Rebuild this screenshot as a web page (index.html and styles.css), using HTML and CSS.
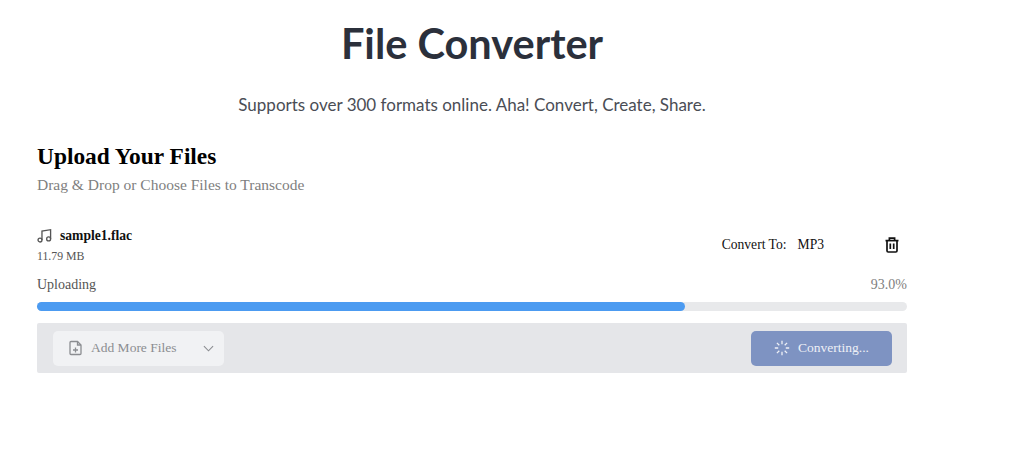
FILE: index.html
```html
<!DOCTYPE html>
<html lang="en">
<head>
    <meta charset="UTF-8">
    <meta name="viewport" content="width=device-width, initial-scale=1.0">
    <title>File Converter</title>
    <link rel="stylesheet" href="styles.css">
</head>
<body>
    <div class="hero">
        <h1>File Converter</h1>
        <p>Supports over 300 formats online. Aha! Convert, Create, Share.</p>
    </div>

    <div class="uploader">
        <h2>Upload Your Files</h2>
        <p class="hint">Drag &amp; Drop or Choose Files to Transcode</p>

        <div class="file-row">
            <div class="file-info">
                <div class="file-name">
                    <svg class="note" width="15" height="15" viewBox="0 0 16 16" fill="none" stroke="#555" stroke-width="1.4">
                        <circle cx="3.2" cy="12.8" r="2.1"/>
                        <circle cx="12.4" cy="11.6" r="2.1"/>
                        <path d="M5.3 12.8V3.2L14.5 1.8v9.8"/>
                    </svg>
                    <span>sample1.flac</span>
                </div>
                <div class="file-size">11.79 MB</div>
            </div>
            <div class="convert-to">
                <span>Convert To:</span>
                <span class="format">MP3</span>
            </div>
            <svg class="trash" width="16" height="16" viewBox="0 0 16 16" fill="none" stroke="#111" stroke-width="1.7">
                <path d="M1.5 3.6h13"/>
                <path d="M5.4 3.4V1.2h5.2v2.2"/>
                <path d="M3 3.6v10.2q0 1.2 1.2 1.2h7.6q1.2 0 1.2-1.2V3.6"/>
                <path d="M6.3 6.6v5.4M9.7 6.6v5.4"/>
            </svg>
        </div>

        <div class="progress-labels">
            <span>Uploading</span>
            <span class="percent">93.0%</span>
        </div>
        <div class="progress-track">
            <div class="progress-fill" style="width: 74.5%"></div>
        </div>

        <div class="action-bar">
            <div class="add-files">
                <svg width="16" height="16" viewBox="0 0 16 16" fill="none" stroke="#8b8d91" stroke-width="1.3">
                    <path d="M3 1.5h6.5L13 5v8.5q0 1-1 1H3q-1 0-1-1v-11q0-1 1-1z"/>
                    <path d="M9.5 1.5V5H13"/>
                    <path d="M7.5 7.5v5M5 10h5"/>
                </svg>
                <span>Add More Files</span>
                <svg class="chevron" width="11" height="11" viewBox="0 0 12 12" fill="none" stroke="#8b8d91" stroke-width="1.2">
                    <path d="M1 3.5l5 5 5-5"/>
                </svg>
            </div>
            <div class="convert-btn">
                <svg width="16" height="16" viewBox="0 0 16 16" fill="none" stroke="#eef0f6" stroke-width="1.3">
                    <path d="M8 .8v3.4M8 11.8v3.4M.8 8h3.4M11.8 8h3.4M2.9 2.9l2.4 2.4M10.7 10.7l2.4 2.4M2.9 13.1l2.4-2.4M10.7 5.3l2.4-2.4"/>
                </svg>
                <span>Converting...</span>
            </div>
        </div>
    </div>
</body>
</html>
```

FILE: styles.css
```css
body { margin: 0; background-color: #fff; font-family: "Liberation Serif", "Times New Roman", serif; }

.hero { width: 944px; text-align: center; font-family: Lato, sans-serif; }
.hero h1 { margin: 0; padding-top: 17px; font-size: 41.5px; line-height: 53px; font-weight: 700; color: #2b303b; }
.hero p { margin: 23px 0 0; font-size: 17px; line-height: 24px; color: #4a4d55; }

.uploader { width: 870px; margin: 26px 0 0 37px; }
.uploader h2 { margin: 0; font-size: 23.4px; line-height: 27px; font-weight: 700; color: #000; }
.hint { margin: 6px 0 0; font-size: 15.5px; line-height: 18px; color: #808080; }

.file-row { display: flex; align-items: center; margin-top: 32px; height: 38px; }
.file-info { flex: 1; }
.file-name { display: flex; align-items: center; gap: 8px; font-size: 13.6px; line-height: 18px; font-weight: 700; color: #111; }
.file-size { margin-top: 4px; font-size: 11.8px; line-height: 15px; color: #555; }
.convert-to { display: flex; gap: 11px; font-size: 13.6px; color: #111; margin-right: 60px; }
.trash { margin-right: 7px; }

.progress-labels { display: flex; justify-content: space-between; margin-top: 12px; font-size: 14px; line-height: 17px; color: #555; }
.progress-labels .percent { color: #808080; }
.progress-track { height: 9px; margin-top: 9px; border-radius: 5px; background-color: #e8e9eb; }
.progress-fill { height: 100%; border-radius: 5px; background-color: #4c9bf1; }

.action-bar { display: flex; justify-content: space-between; align-items: center; height: 50px; margin-top: 12px; padding: 0 15px 0 16px; box-sizing: border-box; border-radius: 2px; background-color: #e5e6e9; }
.add-files { display: flex; align-items: center; width: 171px; height: 35px; padding: 0 10px 0 15px; box-sizing: border-box; border-radius: 5px; background-color: #f1f2f4; font-size: 13.5px; color: #8b8d91; }
.add-files span { margin-left: 7px; }
.add-files .chevron { margin-left: auto; }
.convert-btn { display: flex; align-items: center; justify-content: center; gap: 8px; width: 141px; height: 35px; border-radius: 5px; background-color: #7e93c2; font-size: 13.5px; color: #eef0f6; }
```
